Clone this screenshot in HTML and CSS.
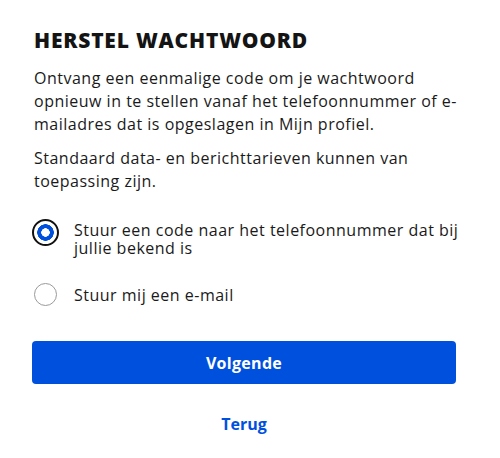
FILE: index.html
```html
<!DOCTYPE html>
<html lang="nl">
<head>
<meta charset="utf-8">
<title>Herstel wachtwoord</title>
<link rel="stylesheet" href="styles.css">
</head>
<body>
<main class="card">
  <h1 class="title">HERSTEL WACHTWOORD</h1>
  <p class="text">Ontvang een eenmalige code om je wachtwoord opnieuw in te stellen vanaf het telefoonnummer of e-mailadres dat is opgeslagen in Mijn profiel.</p>
  <p class="text text-second">Standaard data- en berichttarieven kunnen van toepassing zijn.</p>
  <div class="options">
    <label class="option">
      <span class="radio radio-checked"></span>
      <span class="option-label">Stuur een code naar het telefoonnummer dat bij jullie bekend is</span>
    </label>
    <label class="option option-single">
      <span class="radio"></span>
      <span class="option-label">Stuur mij een e-mail</span>
    </label>
  </div>
  <button class="btn-primary" type="button">Volgende</button>
  <a class="link-back" href="#">Terug</a>
</main>
</body>
</html>
```

FILE: styles.css
```css
* { box-sizing: border-box; }
html, body { margin: 0; padding: 0; background: #fff; }
body {
  font-family: "Open Sans", "Liberation Sans", sans-serif;
  color: #1a1a1a;
}
.card {
  padding: 27px 36px 0 34px;
  display: flex;
  flex-direction: column;
}
.title {
  margin: 0;
  font-size: 21px;
  font-weight: 800;
  letter-spacing: 0.8px;
  line-height: 26px;
  color: #141414;
}
.text {
  margin: 14px 0 0;
  font-size: 16px;
  letter-spacing: 0.5px;
  line-height: 23px;
}
.text-second { margin-top: 11px; }
.options {
  display: flex;
  flex-direction: column;
  margin-top: 26px;
  margin-left: -2px;
}
.option {
  display: flex;
  align-items: flex-start;
  gap: 15px;
  font-size: 16px;
  letter-spacing: 0.5px;
  line-height: 18px;
}
.option-single { margin-top: 26px; align-items: center; }
.option-label { padding-top: 2px; }
.option-single .option-label { padding-top: 0; }
.radio {
  flex: none;
  width: 24px;
  height: 24px;
  border-radius: 50%;
  border: 1px solid #9a9a9a;
}
.option-single .radio { width: 23px; height: 23px; margin-left: 2px; margin-right: 2px; }
.radio-checked {
  border: 2px solid #111;
  background: radial-gradient(circle, #fff 0 4px, #0050de 4.5px 8px, #fff 8.5px);
  width: 27px;
  height: 27px;
}
.btn-primary {
  margin: 35px 0 0 -2px;
  height: 43px;
  width: 424px;
  border: 0;
  border-radius: 4px;
  background: #0050de;
  color: #fff;
  font-family: inherit;
  font-size: 16px;
  font-weight: 700;
  letter-spacing: 0.3px;
}
.link-back {
  align-self: center;
  margin-top: 29px;
  margin-right: 10px;
  color: #0050de;
  font-weight: 700;
  font-size: 16px;
  text-decoration: none;
}
```
